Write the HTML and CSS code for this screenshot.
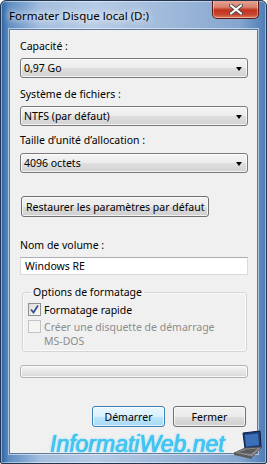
FILE: index.html
```html
<!DOCTYPE html>
<html lang="fr">
<head>
    <meta charset="UTF-8">
    <meta name="viewport" content="width=device-width, initial-scale=1.0">
    <title>Formater Disque local (D:)</title>
    <link rel="stylesheet" href="styles.css">
</head>
<body>

    <div class="window">
        <div class="titlebar">
            <span class="title">Formater Disque local (D:)</span>
            <button class="close">
                <svg width="14" height="11" viewBox="0 0 14 11">
                    <path d="M2 1.5 L12 9.5 M12 1.5 L2 9.5" stroke="#4b4b4b" stroke-width="4" stroke-linecap="round"/>
                    <path d="M2 1.5 L12 9.5 M12 1.5 L2 9.5" stroke="#fff" stroke-width="2.2" stroke-linecap="round"/>
                </svg>
            </button>
        </div>

        <div class="panel">
            <label class="lbl first">Capacité :</label>
            <div class="combo"><span>0,97 Go</span><i class="arrow"></i></div>

            <label class="lbl second">Système de fichiers :</label>
            <div class="combo"><span>NTFS (par défaut)</span><i class="arrow"></i></div>

            <label class="lbl third">Taille d’unité d’allocation :</label>
            <div class="combo"><span>4096 octets</span><i class="arrow"></i></div>

            <button class="btn restore">Restaurer les paramètres par défaut</button>

            <label class="lbl volume">Nom de volume :</label>
            <div class="textbox">Windows RE</div>

            <fieldset class="group">
                <legend>Options de formatage</legend>
                <div class="check">
                    <span class="box checked">
                        <svg width="11" height="11" viewBox="0 0 11 11">
                            <path d="M2 5.5 L4.5 8.5 L9 1.5" fill="none" stroke="#3b4f8a" stroke-width="1.8"/>
                        </svg>
                    </span>
                    <span>Formatage rapide</span>
                </div>
                <div class="check disabled">
                    <span class="box"></span>
                    <span>Créer une disquette de démarrage<br>MS-DOS</span>
                </div>
            </fieldset>

            <div class="progress"></div>

            <div class="actions">
                <button class="btn default">Démarrer</button>
                <button class="btn">Fermer</button>
            </div>
        </div>

        <div class="watermark">InformatiWeb.net</div>
        <svg class="laptop" width="30" height="30" viewBox="0 0 30 30">
            <polygon points="10,3 27,1 28,17 12,19" fill="#1d3f7a" stroke="#0c1f40" stroke-width="1"/>
            <polygon points="12,5 25,3.5 26,15 13,16.5" fill="#3d6fb8"/>
            <polygon points="1,23 12,18 29,17 19,27" fill="#8c8c8c" stroke="#4a4a4a" stroke-width="0.8"/>
            <polygon points="5,22.5 13,19.5 25,18.5 18,24" fill="#5c5c5c"/>
            <polygon points="1,23 19,27 19,29 1,25" fill="#5a5a5a"/>
        </svg>
    </div>

</body>
</html>
```

FILE: styles.css
```css
body {
    margin: 0;
    font-family: 'Noto Sans', sans-serif;
    font-size: 10.5px;
    color: #000;
    background-color: #fff;
}
.window {
    position: relative;
    width: 267px;
    height: 464px;
    box-sizing: border-box;
    padding: 0 8px 9px 8px;
    display: flex;
    flex-direction: column;
    border: 1px solid #24364f;
    border-radius: 6px 6px 2px 2px;
    background: linear-gradient(to right, #2a62a2 0, #5f8dc2 3%, #a3bedf 15%, #b7cce5 35%, #9db8d9 65%, #86a6cf 90%, #4d7db5 100%);
    box-shadow: inset 0 0 0 1px rgba(255, 255, 255, 0.45);
    overflow: hidden;
}
.titlebar {
    height: 28px;
    display: flex;
    justify-content: space-between;
    align-items: flex-start;
    flex-shrink: 0;
}
.title {
    font-size: 11.5px;
    padding-top: 7px;
    text-shadow: 0 0 6px #fff, 0 0 10px #fff;
}
.close {
    width: 47px;
    height: 19px;
    margin-right: -1px;
    margin-top: -1px;
    padding: 0;
    border: 1px solid #5a1a14;
    border-top: none;
    border-radius: 0 0 5px 5px;
    background: linear-gradient(#e8a999 0, #d8816e 40%, #c2321f 55%, #c6432d 80%, #e07a5c 100%);
    box-shadow: inset 0 0 0 1px rgba(255, 255, 255, 0.4);
    display: flex;
    align-items: center;
    justify-content: center;
}
.panel {
    flex: 1;
    background-color: #f0f0f0;
    border: 1px solid #5f7b9c;
    padding: 0 9px 0 10px;
    display: flex;
    flex-direction: column;
    align-items: stretch;
    box-shadow: 0 0 0 1px rgba(255, 255, 255, 0.5);
}
.lbl {
    line-height: 15px;
    height: 15px;
    margin-bottom: 4px;
}
.lbl.first {
    margin-top: 9px;
}
.lbl.second {
    margin-top: 9px;
}
.lbl.third {
    margin-top: 7px;
    margin-bottom: 5px;
}
.lbl.volume {
    margin-top: 21px;
}
.combo {
    height: 20px;
    box-sizing: border-box;
    border: 1px solid #7a7a7a;
    border-radius: 3px;
    background: linear-gradient(#f4f4f4 0, #ececec 50%, #dfdfdf 51%, #d2d2d2 100%);
    box-shadow: inset 0 0 0 1px rgba(255, 255, 255, 0.7);
    display: flex;
    align-items: center;
    justify-content: space-between;
    padding: 0 5px 0 3px;
}
.arrow {
    width: 0;
    height: 0;
    border-left: 3.5px solid transparent;
    border-right: 3.5px solid transparent;
    border-top: 4px solid #000;
    margin-top: 1px;
}
.btn {
    font-family: inherit;
    font-size: 10.5px;
    color: #000;
    height: 21px;
    padding: 0 4px;
    border: 1px solid #707070;
    border-radius: 3px;
    background: linear-gradient(#f2f2f2 0, #ebebeb 50%, #dddddd 51%, #cfcfcf 100%);
    box-shadow: inset 0 0 0 1px rgba(255, 255, 255, 0.7);
}
.restore {
    align-self: flex-start;
    margin-top: 23px;
    margin-left: 1px;
}
.textbox {
    height: 18px;
    box-sizing: border-box;
    background-color: #fff;
    border: 1px solid #dadada;
    border-top-color: #abadb3;
    padding: 0 4px;
    line-height: 16px;
}
.group {
    margin: 10px 1px 0 2px;
    padding: 1px 4px 3px 5px;
    border: 1px solid #d5d5d5;
    border-radius: 3px;
    box-shadow: inset 0 0 0 1px #fafafa;
    min-width: 0;
}
.group legend {
    padding: 0 2px;
    margin-left: 3px;
    line-height: 15px;
}
.check {
    display: flex;
    align-items: flex-start;
    gap: 3px;
    line-height: 14px;
    margin-top: 2px;
}
.check + .check {
    margin-top: 3px;
}
.box {
    width: 13px;
    height: 13px;
    box-sizing: border-box;
    border: 1px solid #8e8f8f;
    background: linear-gradient(135deg, #dcdcdc, #fbfbfb);
    display: flex;
    align-items: center;
    justify-content: center;
    flex-shrink: 0;
}
.disabled {
    color: #8d8d8d;
}
.disabled .box {
    border-color: #c4c4c4;
    background: #f4f4f4;
}
.progress {
    margin-top: 13px;
    height: 13px;
    box-sizing: border-box;
    border: 1px solid #b2b2b2;
    border-radius: 3px;
    background: linear-gradient(#f5f5f5 0, #e6e6e6 50%, #d8d8d8 100%);
    box-shadow: inset 0 0 0 1px rgba(255, 255, 255, 0.8);
}
.actions {
    margin-top: 28px;
    margin-right: 2px;
    display: flex;
    justify-content: flex-end;
    gap: 8px;
}
.actions .btn {
    width: 73px;
}
.btn.default {
    border-color: #3c7fb1;
    background: linear-gradient(#eaf6fd 0, #d9f0fc 50%, #bee6fd 51%, #a7d9f5 100%);
}
.watermark {
    position: absolute;
    left: 49px;
    top: 430px;
    font-family: 'Liberation Sans', Arial, sans-serif;
    font-style: italic;
    font-size: 23px;
    color: #3ccaf8;
    text-shadow: 0 0 1px #1a86c9, 0 0 3px #9be6ff;
}
.laptop {
    position: absolute;
    right: 3px;
    bottom: 3px;
}
```
